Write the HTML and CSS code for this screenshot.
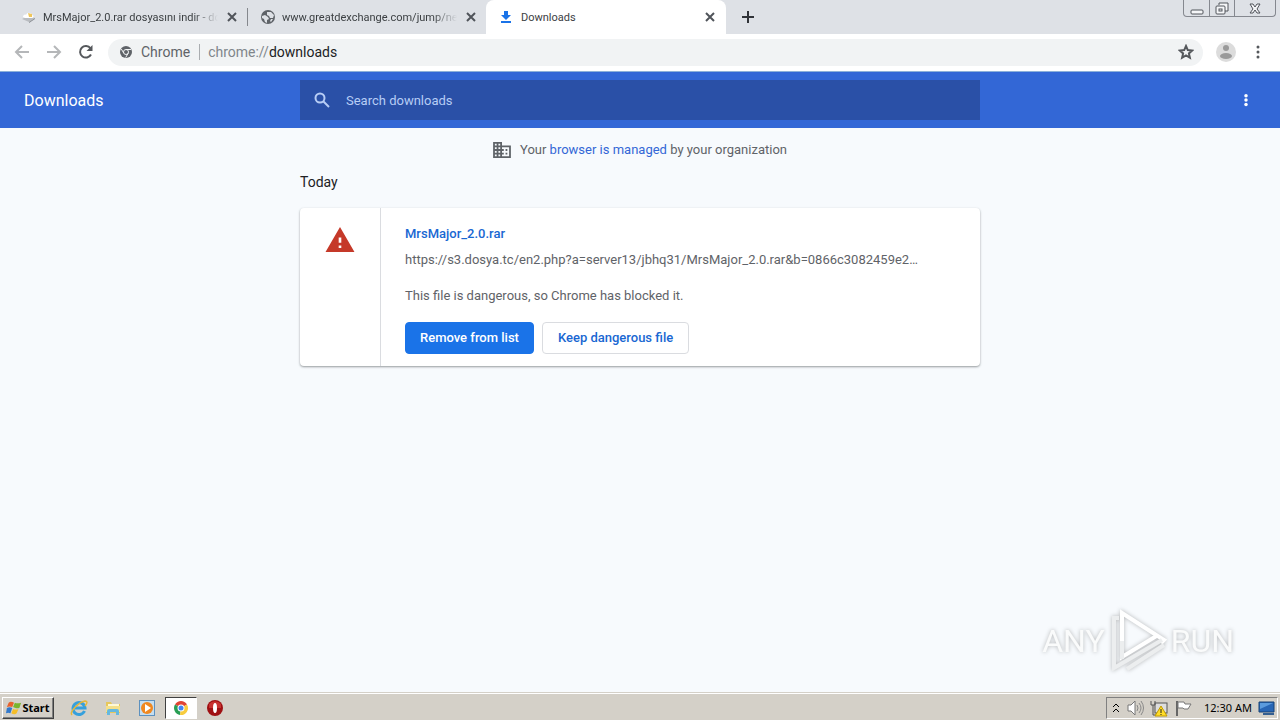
FILE: index.html
```html
<!DOCTYPE html>
<html lang="en">
<head>
<meta charset="UTF-8">
<meta name="viewport" content="width=device-width, initial-scale=1.0">
<title>Downloads</title>
<link rel="stylesheet" href="styles.css">
</head>
<body>
<div class="tab-strip">
  <div class="tab">
    <svg class="favicon" viewBox="0 0 16 16"><path d="M1 10l6-3 7 2-6 4z" fill="#b9bcc0"/><path d="M8 13l6-4v1l-6 4z" fill="#85898e"/><path d="M2 8c0-2 2-3 3-2 1-3 5-3 6 0 2 0 2 3 0 3H4z" fill="#fff"/><path d="M7 4l4 1v3H8z" fill="#efc65c"/></svg>
    <span class="tab-title fade">MrsMajor_2.0.rar dosyasını indir - do</span>
    <button class="tab-close" aria-label="Close tab"><svg viewBox="0 0 16 16"><path d="M4 4l8 8M12 4l-8 8"/></svg></button>
  </div>
  <div class="tab second">
    <svg class="favicon" viewBox="0 0 16 16"><circle cx="8" cy="8" r="7" fill="#5f6368"/><path d="M2 7l3-1 3 2 1 2-2 1 0 3-2-1-1-3-2-1zM7 3h4l3 3-1 3-3 0-1-2-2-1zM11 10l2 0-2 3-1-1z" fill="#dee1e6"/></svg>
    <span class="tab-title fade">www.greatdexchange.com/jump/ne</span>
    <button class="tab-close" aria-label="Close tab"><svg viewBox="0 0 16 16"><path d="M4 4l8 8M12 4l-8 8"/></svg></button>
  </div>
  <div class="tab active">
    <svg class="favicon" viewBox="0 0 16 16"><path d="M5 2h4v4h3l-5 5-5-5h3zM2 12h10v2H2z" fill="#1a73e8"/></svg>
    <span class="tab-title">Downloads</span>
    <button class="tab-close" aria-label="Close tab"><svg viewBox="0 0 16 16"><path d="M4 4l8 8M12 4l-8 8"/></svg></button>
  </div>
  <button class="new-tab" aria-label="New tab"><svg viewBox="0 0 16 16"><path d="M8 2v12M2 8h12"/></svg></button>
  <div class="window-controls">
    <button aria-label="Minimize"><svg viewBox="0 0 16 16"><rect x="2" y="10" width="12" height="4" rx="1"/></svg></button>
    <button aria-label="Restore"><svg viewBox="0 0 16 16"><path d="M5 5V3h9v8h-3"/><rect x="2" y="6" width="9" height="8" rx="1"/><rect x="5" y="9" width="3" height="2"/></svg></button>
    <button class="wide" aria-label="Close"><svg viewBox="0 0 16 16"><path d="M3 4h3l2 3 2-3h3l-3 5 3 4h-3l-2-3-2 3H3l3-4z"/></svg></button>
  </div>
</div>

<div class="toolbar">
  <button class="nav" aria-label="Back" disabled><svg viewBox="0 0 16 16"><path d="M15 8H2M8 2L2 8l6 6"/></svg></button>
  <button class="nav" aria-label="Forward" disabled><svg viewBox="0 0 16 16"><path d="M1 8h13M8 2l6 6-6 6"/></svg></button>
  <button class="nav" aria-label="Reload"><svg viewBox="0 0 16 16"><path d="M13 10.500A5.800 5.800 0 1 1 12.500 4.300" /><path d="M14.500 1v6H8.500z" class="solid"/></svg></button>
  <div class="omnibox">
    <svg class="chrome-chip" viewBox="0 0 16 16"><circle cx="8" cy="8" r="6" fill="#5f6368"/><circle cx="8" cy="8" r="2.500" fill="none" stroke="#f1f3f4"/><path d="M8 5.500h5M5.800 9.200L3.300 5M10.200 9.200L7.700 13.500" stroke="#f1f3f4"/></svg>
    <span class="origin">Chrome</span>
    <label class="scheme" for="address">chrome://</label>
    <input id="address" type="text" value="downloads">
    <button class="star" aria-label="Bookmark this page"><svg viewBox="0 0 16 16"><path d="M8 2l1.800 4.100 4.400.400-3.300 2.900 1 4.400L8 11.500l-3.900 2.300 1-4.400L1.800 6.500l4.400-.400z"/></svg></button>
  </div>
  <button class="profile" aria-label="Profile"><svg viewBox="0 0 20 20"><circle cx="10" cy="10" r="10" fill="#dcdcdc"/><circle cx="10" cy="6" r="3" fill="#9a9a9a"/><ellipse cx="10" cy="14" rx="6" ry="3" fill="#9a9a9a"/></svg></button>
  <button class="menu" aria-label="Customize and control"><svg viewBox="0 0 16 16"><circle cx="8" cy="3" r="1.500"/><circle cx="8" cy="8" r="1.500"/><circle cx="8" cy="13" r="1.500"/></svg></button>
</div>

<header class="page-header">
  <h1>Downloads</h1>
  <div class="search">
    <svg viewBox="0 0 16 16"><circle cx="6" cy="6" r="4.500"/><path d="M9.500 9.500l5.500 5.500"/></svg>
    <input type="search" placeholder="Search downloads" aria-label="Search downloads">
  </div>
  <button class="menu light" aria-label="More actions"><svg viewBox="0 0 16 16"><circle cx="8" cy="3" r="2"/><circle cx="8" cy="8" r="2"/><circle cx="8" cy="13" r="2"/></svg></button>
</header>

<main>
  <p class="managed">
    <svg viewBox="2 3 20 18"><path d="M12 7V3H2v18h20V7H12zM6 19H4v-2h2v2zm0-4H4v-2h2v2zm0-4H4V9h2v2zm0-4H4V5h2v2zm4 12H8v-2h2v2zm0-4H8v-2h2v2zm0-4H8V9h2v2zm0-4H8V5h2v2zm10 12h-8v-2h2v-2h-2v-2h2v-2h-2V9h8v10zm-2-8h-2v2h2v-2zm0 4h-2v2h2v-2z"/></svg>
    <span>Your <a href="#">browser is managed</a> by your organization</span>
  </p>
  <div class="list">
    <h2>Today</h2>
    <article class="card">
      <div class="card-icon"><svg viewBox="1 2 22 19"><path d="M1 21h22L12 2 1 21zm12-3h-2v-2h2v2zm0-4h-2v-4h2v4z"/></svg></div>
      <div class="card-body">
        <a class="file-name" href="#">MrsMajor_2.0.rar</a>
        <p class="url">https://s3.dosya.tc/en2.php?a=server13/jbhq31/MrsMajor_2.0.rar&amp;b=0866c3082459e2…</p>
        <p class="warning">This file is dangerous, so Chrome has blocked it.</p>
        <div class="actions">
          <button class="primary">Remove from list</button>
          <button>Keep dangerous file</button>
        </div>
      </div>
    </article>
  </div>
</main>

<div class="watermark">
  <span>ANY</span>
  <svg viewBox="0 0 58 64"><path d="M13 32V4l42 27-3 3M13 4v44l36-22" /><path class="shade" d="M10 9H5v50l48-28M18 60l37-24M13 32v18"/></svg>
  <span>RUN</span>
</div>

<footer class="taskbar">
  <button class="start"><svg viewBox="0 0 18 18"><path d="M3 3c2-2 4-1 6 0L7 8C5 7 3 7 1 8z" fill="#e8622c"/><path d="M10 3c2 1 4 1 7 0l-2 6c-3 1-5 0-7-1z" fill="#79b52d"/><path d="M1 9c2-1 4-1 6 0l-2 6c-2-1-3-1-5 0z" fill="#3279cc"/><path d="M8 10c2 1 4 1 6 0l-2 5c-2 2-4 1-6 0z" fill="#f5bd27"/></svg>Start</button>
  <div class="quick-launch">
    <button aria-label="Internet Explorer"><svg viewBox="0 0 18 18"><path d="M14.500 12A6 6 0 1 1 15 9H5" fill="none" stroke="#36a0dc" stroke-width="3"/><path d="M2 16C-1 13 9 3 15 2c3 0 2 3 0 5" fill="none" stroke="#e6b738" stroke-width="1.500"/></svg></button>
    <button aria-label="Windows Explorer"><svg viewBox="0 0 18 18"><path d="M2 3h5l1 2h8v9H2z" fill="#e6c75c"/><path d="M4 5h11v3H4z" fill="#fff8d5"/><path d="M2 7h14v6H2z" fill="#f5e08a"/><path d="M3 16v-4q0-2 2-2h8q2 0 2 2v4h-3v-3H6v3z" fill="#65b8df"/></svg></button>
    <button aria-label="Media Player"><svg viewBox="0 0 18 18"><rect x="1.500" y="1.500" width="15" height="15" fill="#c5def0" stroke="#5d91bf"/><circle cx="9" cy="9" r="6" fill="#f08820"/><path d="M7 5l6 4-6 4z" fill="#fff"/></svg></button>
    <button class="pressed" aria-label="Google Chrome"><svg viewBox="0 0 18 18"><path d="M9 9L3 5.500A7 7 0 0 1 15 5.500z" fill="#e04434"/><path d="M9 9L3 5.500A7 7 0 0 0 8 16z" fill="#289e54"/><path d="M9 9l6-3.500A7 7 0 0 1 8 16z" fill="#f8cc3e"/><circle cx="9" cy="9" r="3.500" fill="#fff"/><circle cx="9" cy="9" r="2.500" fill="#4285f4"/></svg></button>
    <button aria-label="Opera"><svg viewBox="0 0 18 18"><circle cx="9" cy="9" r="8" fill="#9f1013"/><path d="M3 5a8 8 0 0 1 12 0v4H3z" fill="#c8312f"/><ellipse cx="9" cy="9" rx="2" ry="5" fill="#fff"/></svg></button>
  </div>
  <div class="tray">
    <svg class="chevrons" viewBox="0 0 8 12"><path d="M1 5l3-3 3 3M1 10l3-3 3 3"/></svg>
    <svg viewBox="0 0 18 18"><path d="M2 6h3l4-4v14l-4-4H2z" fill="#fff" stroke="#777"/><path d="M11 6q2 3 0 6M13 4q4 5 0 10M15 2q5 7 0 14" fill="none" stroke="#888"/></svg>
    <svg viewBox="0 0 18 18"><rect x="5" y="4" width="12" height="10" fill="#ddd" stroke="#555"/><path d="M1 2v4h4V2M3 6v10h4" fill="none" stroke="#555"/><path d="M11 7l6 10H5z" fill="#ffdc28" stroke="#c19b00"/><path d="M11 10v4M11 15v1" stroke="#222"/></svg>
    <svg viewBox="0 0 18 18"><path d="M3 2v15" stroke="#666" stroke-width="2"/><path d="M4 3h6l1 2h6l-3 5h-4L9 9H4z" fill="#fff" stroke="#777"/></svg>
    <time>12:30 AM</time>
    <svg class="desktop" viewBox="0 0 18 18"><path d="M1 3h15v10H1z" fill="#2866b5" stroke="#174277"/><path d="M2 4h13L2 10z" fill="#5b9bdd"/><path d="M5 15h11" stroke="#345f91" stroke-width="2"/></svg>
  </div>
</footer>
</body>
</html>
```
FILE: styles.css
```css
* {
    box-sizing: border-box;
}

body {
    display: flex;
    flex-direction: column;
    min-height: 100vh;
    margin: 0;
    font-family: Roboto, "Liberation Sans", sans-serif;
    font-size: 13px;
    background-color: #f7fafd;
    color: #5f6368;
}

h1, h2, p {
    margin: 0;
    font-weight: 400;
}

a {
    color: #3367d6;
    text-decoration: none;
}

button {
    display: flex;
    align-items: center;
    justify-content: center;
    padding: 0;
    border: none;
    background: none;
    color: inherit;
    font: inherit;
}

svg {
    display: block;
    flex: none;
    width: 16px;
    height: 16px;
}

input {
    min-width: 0;
    padding: 0;
    border: none;
    outline: none;
    background: none;
    font: inherit;
}

/* Tabs */
.tab-strip {
    display: flex;
    height: 34px;
    padding-left: 8px;
    background-color: #dee1e6;
}

.tab {
    display: flex;
    align-items: center;
    gap: 6px;
    width: 239px;
    padding: 0 7px 0 13px;
    color: #3c4043;
    font-size: 11px;
}

.tab.second {
    background: linear-gradient(#85888d, #85888d) left center / 1px 18px no-repeat;
}

.tab.active {
    width: 240px;
    padding-right: 8px;
    border-radius: 8px 8px 0 0;
    background-color: #fff;
}

.tab-title {
    flex: 1;
    overflow: hidden;
    white-space: nowrap;
}

.tab-title.fade {
    mask-image: linear-gradient(to right, #000 86%, transparent);
}

.tab-close svg, .new-tab svg {
    fill: none;
    stroke: #50545a;
    stroke-width: 2;
}

.new-tab {
    width: 44px;
}

.new-tab svg {
    stroke: #303338;
}

.window-controls {
    display: flex;
    height: 17px;
    margin: 0 4px 0 auto;
    border: 1px solid #85888f;
    border-top: none;
    border-radius: 0 0 4px 4px;
}

.window-controls button {
    width: 25px;
}

.window-controls .wide {
    width: 41px;
}

.window-controls button + button {
    border-left: 1px solid #85888f;
}

.window-controls svg {
    fill: #f5f6f8;
    stroke: #51545b;
}

/* Toolbar */
.toolbar {
    display: flex;
    align-items: center;
    height: 38px;
    padding: 0 10px 1px 6px;
    border-bottom: 1px solid #8db1d9;
    background-color: #fff;
}

.nav {
    width: 32px;
    height: 32px;
}

.nav svg {
    fill: none;
    stroke: #55585c;
    stroke-width: 2;
}

.nav:disabled svg {
    stroke: #b5b7b9;
}

.nav .solid {
    fill: #55585c;
    stroke: none;
}

.omnibox {
    display: flex;
    flex: 1;
    align-items: center;
    height: 27px;
    margin-left: 6px;
    padding: 0 9px 0 10px;
    border-radius: 14px;
    background-color: #f1f3f4;
    font-size: 14px;
}

.omnibox input {
    flex: 1;
    color: #202124;
}

.chrome-chip {
    margin-right: 7px;
}

.origin {
    margin-right: 8px;
    padding-right: 9px;
    border-right: 1px solid #aaadb0;
    line-height: 16px;
}

.scheme {
    color: #80868b;
}

.star svg {
    fill: none;
    stroke: #55585c;
    stroke-width: 2;
}

.profile {
    margin: 0 10px 0 13px;
}

.profile svg {
    width: 20px;
    height: 20px;
}

.menu {
    width: 24px;
    height: 32px;
    fill: #55585c;
}

.menu.light {
    justify-self: end;
    width: 20px;
    fill: #fff;
}

.menu.light svg {
    width: 14px;
    height: 14px;
}

/* Downloads header */
.page-header {
    display: grid;
    grid-template-columns: 1fr minmax(0, 680px) 1fr;
    align-items: center;
    height: 56px;
    padding: 0 24px;
    background-color: #3367d6;
    color: #fff;
}

h1 {
    font-size: 16px;
}

.search {
    display: flex;
    align-items: center;
    gap: 16px;
    height: 40px;
    padding: 0 14px;
    background-color: #2a50a7;
}

.search svg {
    fill: none;
    stroke: #b7cdf5;
    stroke-width: 2;
}

.search input {
    flex: 1;
    color: #fff;
}

.search input::placeholder {
    color: #b7cdf5;
}

/* Downloads list */
main {
    flex: 1;
    padding: 0 24px;
}

.managed {
    display: flex;
    align-items: center;
    justify-content: center;
    gap: 9px;
    height: 43px;
}

.managed svg {
    width: 18px;
    fill: #5f6368;
}

.list {
    max-width: 680px;
    margin: 0 auto;
}

h2 {
    margin-bottom: 15px;
    color: #202124;
    font-size: 14px;
    line-height: 22px;
}

.card {
    display: flex;
    border-radius: 4px;
    background-color: #fff;
    box-shadow: 0 1px 2px rgba(60, 64, 67, 0.4), 0 1px 3px rgba(60, 64, 67, 0.15);
}

.card-icon {
    width: 81px;
    padding: 19px 25px;
    border-right: 1px solid #dadce0;
}

.card-icon svg {
    width: 30px;
    height: 25px;
    fill: #c53929;
}

.card-body {
    flex: 1;
    min-width: 0;
    padding: 17px 24px 12px;
    line-height: 18px;
}

.file-name {
    display: block;
    color: #1967d2;
    font-weight: 500;
}

.url {
    margin-top: 8px;
    overflow: hidden;
    text-overflow: ellipsis;
    white-space: nowrap;
}

.warning {
    margin-top: 18px;
}

.actions {
    display: flex;
    gap: 8px;
    margin-top: 17px;
}

.actions button {
    height: 32px;
    padding: 0 15px;
    border: 1px solid #dadce0;
    border-radius: 4px;
    color: #1967d2;
    font-weight: 500;
}

.actions .primary {
    padding: 0 14px;
    border-color: #1a73e8;
    background-color: #1a73e8;
    color: #fff;
}

/* Recorder logo lying over the page */
.watermark {
    position: absolute;
    right: 46px;
    bottom: 47px;
    display: flex;
    align-items: center;
    gap: 4px;
    color: #fafbfb;
    font-size: 32px;
    filter: drop-shadow(0 0 2px #b4b6b8);
}

.watermark svg {
    width: 58px;
    height: 64px;
    fill: none;
    stroke: #fff;
    stroke-width: 4;
}

.watermark .shade {
    stroke: #eceeef;
}

/* Taskbar */
.taskbar {
    display: flex;
    align-items: center;
    height: 28px;
    padding: 2px 2px 0;
    border-top: 1px solid #d4d0c8;
    background-color: #d4d0c8;
    box-shadow: inset 0 1px #fff;
    color: #000;
    font-family: "Noto Sans", sans-serif;
    font-size: 11px;
}

.start {
    width: 52px;
    height: 22px;
    border: 1px solid;
    border-color: #fff #404040 #404040 #fff;
    box-shadow: inset -1px -1px #808080;
    font-weight: 700;
}

.quick-launch {
    display: flex;
    gap: 2px;
    margin-left: 9px;
}

.quick-launch button {
    width: 32px;
    height: 22px;
}

.quick-launch svg, .tray svg {
    width: 18px;
    height: 18px;
}

.quick-launch .pressed {
    border: 1px solid;
    border-color: #404040 #fff #fff #404040;
    background-color: #fff;
}

.tray {
    display: flex;
    align-items: center;
    gap: 6px;
    height: 22px;
    margin-left: auto;
    padding: 0 1px 0 5px;
    border: 1px solid;
    border-color: #808080 #fff #fff #808080;
}

.tray .chevrons {
    width: 8px;
    height: 12px;
    fill: none;
    stroke: #000;
    stroke-width: 1;
}

.tray time {
    margin-left: 6px;
}
```
